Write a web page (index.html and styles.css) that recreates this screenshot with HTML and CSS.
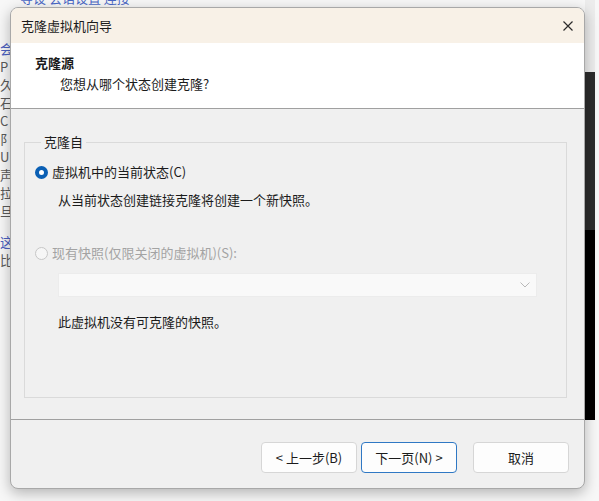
FILE: index.html
```html
<!doctype html>
<html>
	<head>
		<title>克隆虚拟机向导</title>
		<meta charset="utf-8">
		<link rel="stylesheet" href="styles.css">
	</head>
	<body>

		<!--	The desktop behind the dialog.	-->
		<div class="desk">
			<p class="deskTop">等设 会话设置 连接</p>
			<ul class="deskList">
				<li class="blue">会话</li>
				<li>P 设置</li>
				<li>久 保存</li>
				<li>石 确认</li>
				<li>C 克隆</li>
				<li>阝 限制</li>
				<li>U 用户</li>
				<li>声 声明</li>
				<li>拉 拉取</li>
				<li>旦 但是</li>
				<li class="gap blue">这 这里</li>
				<li>比 比较</li>
			</ul>
			<div class="deskSide">
				<div class="sideLight"></div>
				<div class="sideGrey"></div>
				<div class="sideBlack"></div>
			</div>
		</div>

		<!--	The wizard window.	-->
		<div class="dialog">

			<div class="titlebar">
				<span>克隆虚拟机向导</span>
				<svg class="closeIcon" width="10" height="10" viewBox="0 0 10 10">
					<path d="M0.5 0.5 L9.5 9.5 M9.5 0.5 L0.5 9.5" stroke="#2b2b2b" stroke-width="1.2" fill="none"/>
				</svg>
			</div>

			<div class="header">
				<h1 class="pageTitle">克隆源</h1>
				<p class="pageSub">您想从哪个状态创建克隆?</p>
			</div>

			<div class="content">
				<fieldset class="group">
					<legend>克隆自</legend>

					<label class="option">
						<span class="radio checked"></span>
						虚拟机中的当前状态(C)
					</label>
					<p class="hint">从当前状态创建链接克隆将创建一个新快照。</p>

					<label class="option disabled">
						<span class="radio"></span>
						现有快照(仅限关闭的虚拟机)(S):
					</label>
					<div class="select">
						<svg width="10" height="6" viewBox="0 0 10 6">
							<path d="M0.5 0.5 L5 5 L9.5 0.5" stroke="#b8b8b8" stroke-width="1" fill="none"/>
						</svg>
					</div>
					<p class="note">此虚拟机没有可克隆的快照。</p>
				</fieldset>
			</div>

			<div class="footer">
				<button class="btn">&lt; 上一步(B)</button>
				<button class="btn primary">下一页(N) &gt;</button>
				<button class="btn cancel">取消</button>
			</div>

		</div>

	</body>
</html>
```

FILE: styles.css
```css
html, body {
	margin: 0; padding: 0;
	width: 599px;
	height: 501px;
	overflow: hidden;
	font-family: "Noto Sans CJK SC", "Noto Sans", sans-serif;
	font-size: 13px;
	color: #1b1b1b;
	background-color: #f7f7f7;
}

body {
	position: relative;
}

/*	desktop behind the window	*/
.desk {
	position: absolute;
	top: 0; left: 0;
	width: 599px;
	height: 501px;
}

.deskTop {
	position: absolute;
	top: -11px;
	left: 20px;
	margin: 0;
	color: #4a67c6;
	font-size: 13px;
	line-height: 18px;
}

.deskList {
	position: absolute;
	top: 40px;
	left: 0;
	margin: 0; padding: 0;
	list-style: none;
	color: #5a5a5a;
	font-size: 13px;
	line-height: 17px;
}

.deskList li {
	margin-bottom: 1px;
}

.deskList .blue {
	color: #4a5fc0;
}

.deskList .gap {
	margin-top: 14px;
}

.deskSide {
	position: absolute;
	top: 0;
	left: 585px;
	width: 10px;
	height: 501px;
	display: flex;
	flex-direction: column;
}

.sideLight {
	height: 72px;
	background-color: #ececec;
}

.sideGrey {
	height: 158px;
	background-color: #2c2c2c;
}

.sideBlack {
	height: 190px;
	background-color: #000;
}

/*	the window	*/
.dialog {
	position: absolute;
	top: 7px;
	left: 10px;
	width: 573px;
	height: 480px;
	border: 1px solid #a8a8a8;
	border-radius: 8px;
	overflow: hidden;
	display: flex;
	flex-direction: column;
	background-color: #f0f0f0;
	box-shadow: 0 4px 14px rgba(0, 0, 0, 0.28);
}

.titlebar {
	height: 35px;
	flex: none;
	display: flex;
	align-items: center;
	justify-content: space-between;
	padding: 0 11px 0 10px;
	background-color: #f8f1e7;
}

.header {
	height: 65px;
	flex: none;
	background-color: #fff;
	border-bottom: 1px solid #a0a0a0;
	padding-left: 24px;
}

.pageTitle {
	margin: 11px 0 0 0;
	font-size: 13px;
	font-weight: bold;
	line-height: 18px;
}

.pageSub {
	margin: 3px 0 0 25px;
	line-height: 18px;
}

.content {
	flex: 1;
	display: flex;
	flex-direction: column;
	border-bottom: 1px solid #a0a0a0;
}

.group {
	flex: 1;
	margin: 24px 17px 21px 13px;
	padding: 12px 0 0 10px;
	border: 1px solid #dadada;
	min-width: 0;
}

.group legend {
	margin-left: 6px;
	padding: 0 3px;
	line-height: 18px;
}

.option {
	display: flex;
	align-items: center;
	gap: 4px;
	line-height: 18px;
}

.option.disabled {
	color: #a3a3a3;
	margin-top: 35px;
}

.radio {
	width: 13px;
	height: 13px;
	border-radius: 50%;
	box-sizing: border-box;
	border: 1px solid #c6c6c6;
	background-color: #f6f6f6;
}

.radio.checked {
	border: 4px solid #0a5fb4;
	background-color: #fff;
}

.hint {
	margin: 10px 0 0 23px;
	line-height: 18px;
}

.select {
	margin: 11px 29px 0 23px;
	height: 22px;
	border: 1px solid #ececec;
	background-color: #f9f9f9;
	display: flex;
	align-items: center;
	justify-content: flex-end;
	padding-right: 6px;
}

.note {
	margin: 16px 0 0 23px;
	line-height: 18px;
}

.footer {
	flex: none;
	height: 68px;
	box-sizing: border-box;
	display: flex;
	justify-content: flex-end;
	align-items: flex-start;
	padding: 22px 15px 0 0;
}

.btn {
	width: 96px;
	height: 31px;
	font-family: inherit;
	font-size: 13px;
	color: #1b1b1b;
	background-color: #fdfdfd;
	border: 1px solid #d6d6d6;
	border-radius: 4px;
	padding: 0;
	margin-left: 4px;
}

.btn.primary {
	border-color: #2f78c4;
}

.btn.cancel {
	margin-left: 16px;
}
```
